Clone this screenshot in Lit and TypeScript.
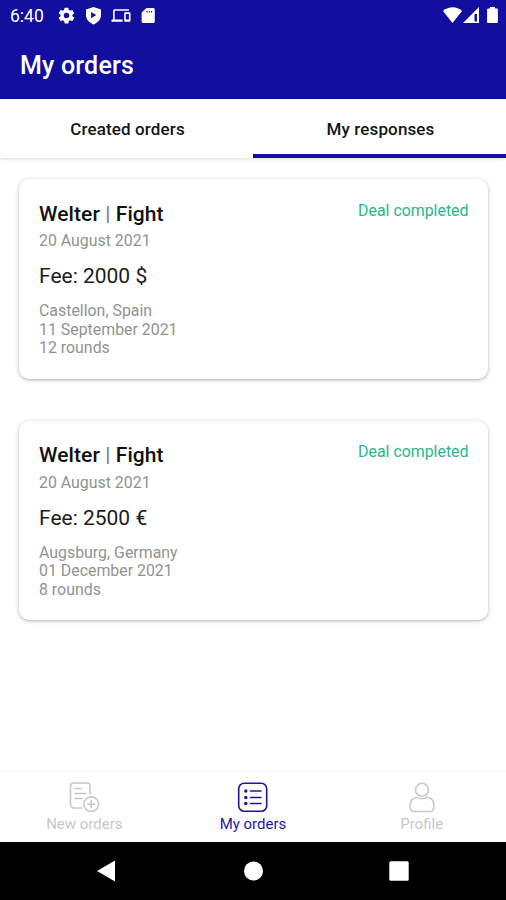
import { LitElement, html, css, svg } from "lit";
import { customElement, property } from "lit/decorators.js";

interface Order {
  created: string;
  fee: string;
  place: string;
  date: string;
  rounds: string;
}

const ORDERS: Order[] = [
  { created: "20 August 2021", fee: "Fee: 2000 $", place: "Castellon, Spain", date: "11 September 2021", rounds: "12 rounds" },
  { created: "20 August 2021", fee: "Fee: 2500 €", place: "Augsburg, Germany", date: "01 December 2021", rounds: "8 rounds" },
];

@customElement("status-bar")
class StatusBar extends LitElement {
  static styles = css`
    :host {
      display: flex;
      justify-content: space-between;
      height: 32px;
      box-sizing: border-box;
      padding: 0 7px 0 10px;
      background: #120f9e;
      color: #fff;
      fill: #fff;
    }
    .left, .right { display: flex; align-items: center; }
    .time { font: 400 17.500px/32px Roboto, sans-serif; width: 46.500px; }
    .icons { display: flex; align-items: center; gap: 8px; padding-bottom: 1px; }
    svg { display: block; }
  `;
  render() {
    return html`
      <div class="left">
        <span class="time">6:40</span>
        <div class="icons">
          <svg width="19" height="19" viewBox="0 0 24 24"><path d="M19.4 13a7.500 7.500 0 0 0 0-2l2.100-1.600a.5.5 0 0 0 .1-.6l-2-3.500a.5.5 0 0 0-.6-.2l-2.500 1a7.300 7.300 0 0 0-1.700-1l-.4-2.600a.5.5 0 0 0-.5-.4h-4a.5.5 0 0 0-.5.4L9 5.100a7.700 7.700 0 0 0-1.700 1l-2.500-1a.5.5 0 0 0-.6.200l-2 3.500a.5.5 0 0 0 .1.600L4.500 11a7.900 7.900 0 0 0 0 2l-2.100 1.600a.5.5 0 0 0-.1.600l2 3.500c.1.200.4.300.6.200l2.500-1a7.300 7.300 0 0 0 1.700 1l.4 2.600c0 .3.200.5.500.5h4c.3 0 .5-.2.5-.5l.4-2.600a7.700 7.700 0 0 0 1.700-1l2.500 1c.2.100.5 0 .6-.2l2-3.500a.5.5 0 0 0-.1-.6zM12 15.500a3.500 3.500 0 1 1 0-7 3.500 3.500 0 0 1 0 7z"/></svg>
          <svg width="19" height="19" viewBox="0 0 24 24"><path fill-rule="evenodd" d="M12 1.200 21.500 4.500v7c0 5.500-4 9.800-9.500 11.800C6.500 21.300 2.500 17 2.500 11.500v-7zM9 7.500v8l6.500-4z"/></svg>
          <svg width="20" height="19" viewBox="0 0 24 24"><path d="M4 6h18V4H4c-1.100 0-2 .9-2 2v11H0v3h14v-3H4zm19 2h-6c-.6 0-1 .4-1 1v10c0 .6.400 1 1 1h6c.6 0 1-.4 1-1V9c0-.6-.4-1-1-1zm-1 9h-4v-7h4z"/></svg>
          <svg width="18" height="19" viewBox="0 0 24 24"><path fill-rule="evenodd" d="M19 2h-9L3.500 8v12c0 1.100.9 2 2 2H19c1.100 0 2-.9 2-2V4c0-1.100-.9-2-2-2z"/><path d="M10 6h1.500v2H10zm3 0h1.500v2H13zm3 0h1.500v2H16z" fill="#120f9e"/></svg>
        </div>
      </div>
      <div class="right">
        <svg width="56" height="32" viewBox="0 0 56 32">
          <path d="M0 11C5.500 6 14 6 19 11L9.500 23z"/>
          <path fill-rule="evenodd" d="M20 23 36 7v16zM31.500 14v7.500H34V14z"/>
          <path d="M45 8.500h2V7h5v1.500h2c.5 0 .9.400.9.900v12.700c0 .5-.4.900-.9.900h-9c-.5 0-.9-.4-.9-.9V9.400c0-.5.4-.9.900-.9z"/>
        </svg>
      </div>
    `;
  }
}

@customElement("order-card")
class OrderCard extends LitElement {
  @property({ attribute: false }) order!: Order;

  static styles = css`
    :host {
      display: flex;
      justify-content: space-between;
      align-items: flex-start;
      box-sizing: border-box;
      height: 199.500px;
      padding: 22.800px 19.500px 0 20px;
      border-radius: 10px;
      background: #fff;
      box-shadow: 0 1px 4px rgba(0, 0, 0, 0.26), 0 1px 1px rgba(0, 0, 0, 0.08);
      font-family: Roboto, sans-serif;
    }
    .title { font-size: 21px; font-weight: 500; line-height: 25px; letter-spacing: 0.080px; color: #111; white-space: nowrap; }
    .bar { font-weight: 400; color: #777; }
    .small { font-size: 15.900px; line-height: 18.700px; color: #929292; white-space: nowrap; }
    .created { margin-top: 5.500px; }
    .fee { margin: 13px 0 13px; font-size: 21px; line-height: 25px; color: #1c1c1c; white-space: nowrap; }
    .status { margin-top: -1px; font-size: 15.900px; line-height: 19px; color: #26b88a; white-space: nowrap; }
  `;
  render() {
    const o = this.order;
    return html`
      <div>
        <div class="title">Welter <span class="bar">|</span> Fight</div>
        <div class="small created">${o.created}</div>
        <div class="fee">${o.fee}</div>
        <div class="small">${o.place}</div>
        <div class="small">${o.date}</div>
        <div class="small">${o.rounds}</div>
      </div>
      <div class="status">Deal completed</div>
    `;
  }
}

const newOrderIcon = svg`
  <path d="M12.500 26H5.500A4 4 0 0 1 1.500 22V4A3 3 0 0 1 4.500 1H18a3 3 0 0 1 3 3v8"/>
  <path d="M6 6.500h6M6 11.500h11M6 16.500h7"/>
  <circle cx="22.200" cy="22.200" r="7.300"/>
  <path d="M22.200 18.700v7M18.700 22.200h7"/>`;
const listIcon = svg`
  <rect x="1.700" y="1.200" width="28" height="28" rx="5.500"/>
  <path d="M13.500 9h10.500M13.500 15.500h10.500M13.500 21.500h10.500"/>
  <g fill="currentColor" stroke="none"><circle cx="8.800" cy="9" r="1.700"/><circle cx="8.800" cy="15.500" r="1.700"/><circle cx="8.800" cy="21.500" r="1.700"/></g>`;
const profileIcon = svg`
  <circle cx="16" cy="7.800" r="6.500"/>
  <path d="M10 15.200C6 16 4 19.500 4 24.500c0 3.500 1.500 5 4.500 5h15c3 0 4.500-1.500 4.500-5 0-5-2-8.500-6-9.300-2 0-3 1.600-6 1.600s-4-1.600-6-1.600z"/>`;

@customElement("app-root")
class AppRoot extends LitElement {
  static styles = css`
    :host {
      display: flex;
      flex-direction: column;
      height: 900px;
      background: #fff;
      font-family: Roboto, sans-serif;
      overflow: hidden;
    }
    .header {
      height: 66.500px;
      box-sizing: border-box;
      padding: 18px 20px 0;
      background: #120f9e;
      color: #fff;
      font-size: 25px;
      line-height: 31px;
      font-weight: 500;
      letter-spacing: 0.200px;
    }
    .tabs {
      display: grid;
      grid-template-columns: 1fr 1fr;
      height: 59px;
      box-shadow: 0 1px 3px rgba(0, 0, 0, 0.16);
    }
    .tab {
      display: flex;
      justify-content: center;
      box-sizing: border-box;
      padding: 18px 0 0 2px;
      border-bottom: 4px solid transparent;
      font-size: 17px;
      line-height: 24px;
      font-weight: 500;
      letter-spacing: 0.130px;
      color: #161616;
    }
    .tab.active { border-bottom-color: #120f9e; }
    .list {
      flex: 1;
      display: flex;
      flex-direction: column;
      gap: 42px;
      padding: 21.500px 18px 0 19px;
    }
    .nav {
      display: grid;
      grid-template-columns: repeat(3, 1fr);
      height: 71px;
      box-sizing: border-box;
      border-top: 1px solid #f4f4f4;
      color: #c8c8c8;
    }
    .item {
      display: flex;
      flex-direction: column;
      align-items: center;
      padding-top: 10px;
      font-size: 15px;
      line-height: 20px;
    }
    .item.active { color: #1d1899; }
    .item svg { display: block; margin-bottom: 1px; }
    .system {
      display: flex;
      justify-content: center;
      gap: 126px;
      height: 58px;
      align-items: center;
      background: #000;
    }
    .system svg { display: block; fill: #fff; }
  `;
  render() {
    const item = (label: string, icon: unknown, active = false) => html`
      <div class="item ${active ? "active" : ""}">
        <svg width="31" height="31" viewBox="0 0 31 31" fill="none" stroke="currentColor"
          stroke-width="1.600" stroke-linecap="round" stroke-linejoin="round">${icon}</svg>
        <span>${label}</span>
      </div>`;
    return html`
      <status-bar></status-bar>
      <div class="header">My orders</div>
      <div class="tabs">
        <div class="tab">Created orders</div>
        <div class="tab active">My responses</div>
      </div>
      <div class="list">${ORDERS.map((o) => html`<order-card .order=${o}></order-card>`)}</div>
      <div class="nav">
        ${item("New orders", newOrderIcon)}
        ${item("My orders", listIcon, true)}
        ${item("Profile", profileIcon)}
      </div>
      <div class="system">
        <svg width="20" height="22" viewBox="0 0 20 22"><path d="M18 .5v21L0 11z"/></svg>
        <svg width="20" height="20" viewBox="0 0 20 20"><circle cx="10.500" cy="10" r="9.500"/></svg>
        <svg width="20" height="20" viewBox="0 0 20 20"><rect x=".3" y=".3" width="19.400" height="19.400" rx="1.500"/></svg>
      </div>
    `;
  }
}
